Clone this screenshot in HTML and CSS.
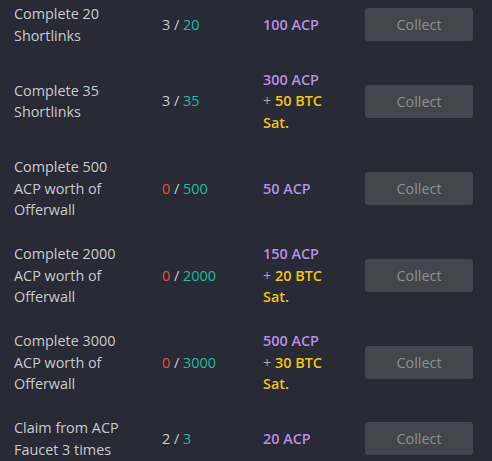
FILE: index.html
```html
<!DOCTYPE html>
<html>
<head>
<meta charset="utf-8">
<link rel="stylesheet" href="styles.css">
</head>
<body>
<div class="tasks">
  <div class="task">
    <div class="name">Complete 20 Shortlinks</div>
    <div class="progress">3 / <span class="goal">20</span></div>
    <div class="reward"><span class="acp">100 ACP</span></div>
    <div class="action"><button class="collect">Collect</button></div>
  </div>
  <div class="task">
    <div class="name">Complete 35 Shortlinks</div>
    <div class="progress">3 / <span class="goal">35</span></div>
    <div class="reward"><span class="acp">300 ACP</span> <span class="plus">+</span> <span class="btc">50 BTC</span> <span class="btc">Sat.</span></div>
    <div class="action"><button class="collect">Collect</button></div>
  </div>
  <div class="task">
    <div class="name">Complete 500 ACP worth of Offerwall</div>
    <div class="progress"><span class="zero">0</span> / <span class="goal">500</span></div>
    <div class="reward"><span class="acp">50 ACP</span></div>
    <div class="action"><button class="collect">Collect</button></div>
  </div>
  <div class="task">
    <div class="name">Complete 2000 ACP worth of Offerwall</div>
    <div class="progress"><span class="zero">0</span> / <span class="goal">2000</span></div>
    <div class="reward"><span class="acp">150 ACP</span> <span class="plus">+</span> <span class="btc">20 BTC</span> <span class="btc">Sat.</span></div>
    <div class="action"><button class="collect">Collect</button></div>
  </div>
  <div class="task">
    <div class="name">Complete 3000 ACP worth of Offerwall</div>
    <div class="progress"><span class="zero">0</span> / <span class="goal">3000</span></div>
    <div class="reward"><span class="acp">500 ACP</span> <span class="plus">+</span> <span class="btc">30 BTC</span> <span class="btc">Sat.</span></div>
    <div class="action"><button class="collect">Collect</button></div>
  </div>
  <div class="task">
    <div class="name">Claim from ACP Faucet 3 times</div>
    <div class="progress">2 / <span class="goal">3</span></div>
    <div class="reward"><span class="acp">20 ACP</span></div>
    <div class="action"><button class="collect">Collect</button></div>
  </div>
</div>
</body>
</html>
```
FILE: styles.css
```css
html, body {
  margin: 0;
  padding: 0;
  background: #282a36;
  overflow: hidden;
}

body {
  font-family: "Open Sans", "Noto Sans", sans-serif;
  font-size: 14.4px;
  line-height: 21.6px;
  color: #c9c9cb;
}

.tasks {
  margin-top: -8px;
}

.task {
  display: grid;
  grid-template-columns: 148px 101px 102px 122px;
  align-items: center;
  padding: 11.2px 0;
}

.name {
  padding: 0 14px;
}

.progress {
  padding-left: 14px;
}

.goal {
  color: #1abc9c;
}

.zero {
  color: #e74c3c;
}

.reward {
  padding-left: 14px;
  width: 64px;
  font-weight: 600;
}

.acp {
  color: #b88ee0;
}

.plus {
  font-weight: 400;
  color: #a9abb0;
}

.btc {
  color: #f1c40f;
}

.action {
  padding-left: 14px;
}

.collect {
  display: block;
  width: 108px;
  height: 33px;
  border: 0;
  border-radius: 3px;
  background: #44464d;
  color: #8c8e93;
  font-family: inherit;
  font-size: 14.4px;
  padding: 0;
}
```
